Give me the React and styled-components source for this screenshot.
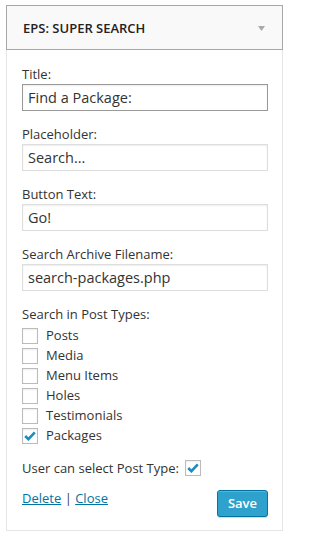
import React, { useState } from 'react';
import styled, { createGlobalStyle } from 'styled-components';

const GlobalStyle = createGlobalStyle`
  html, body {
    margin: 0;
    padding: 0;
    background: #fff;
  }
  * {
    box-sizing: border-box;
  }
`;

const Page = styled.div`
  padding: 5px 5px 8px 6px;
  font-family: "Open Sans", "Liberation Sans", sans-serif;
  font-size: 13px;
  color: #333;
`;

const Widget = styled.div`
  width: 277px;
`;

const WidgetTop = styled.div`
  height: 45px;
  display: flex;
  align-items: center;
  justify-content: space-between;
  padding: 0 17px 0 16px;
  background: #f9f9f9;
  border: 1px solid #a7a7a7;
`;

const WidgetTitle = styled.h4`
  margin: 0;
  font-size: 13px;
  font-weight: 600;
  color: #222;
`;

const Arrow = styled.svg`
  display: block;
  width: 7px;
  height: 5px;
  margin-top: 2px;
`;

const WidgetInside = styled.div`
  border: 1px solid #e5e5e5;
  border-top: none;
  padding: 15px 14px 13px 15px;
`;

const Field = styled.div`
  margin-bottom: 14px;
`;

const Label = styled.label`
  display: block;
  line-height: 18px;
  margin-bottom: 1px;
  color: #333;
`;

const TextInput = styled.input`
  display: block;
  width: 100%;
  height: 27px;
  margin: 0;
  padding: 0 5px;
  font-family: inherit;
  font-size: 14.5px;
  color: #333;
  background: #fff;
  border: 1px solid ${p => (p.$focused ? '#999' : '#ddd')};
  border-radius: 0;
  box-shadow: inset 0 1px 2px rgba(0, 0, 0, 0.07);
  outline: none;
`;

const TypeList = styled.div`
  margin-top: 3px;
`;

const CheckRow = styled.label`
  display: flex;
  align-items: flex-start;
  height: 20px;
  line-height: 18px;
  gap: 8px;
  cursor: pointer;
`;

const Box = styled.span`
  flex-shrink: 0;
  width: 16px;
  height: 16px;
  margin-top: 2px;
  display: flex;
  align-items: center;
  justify-content: center;
  background: #fff;
  border: 1px solid #bbb;
  box-shadow: inset 0 1px 2px rgba(0, 0, 0, 0.07);
`;

const Tick = styled.svg`
  display: block;
  width: 12px;
  height: 10px;
`;

const SelectRow = styled.label`
  display: flex;
  align-items: center;
  gap: 6px;
  margin-top: 13px;
  line-height: 18px;
  cursor: pointer;

  ${Box} {
    margin-top: 0;
  }
`;

const Actions = styled.div`
  display: flex;
  justify-content: space-between;
  align-items: flex-start;
  margin-top: 13px;
`;

const Links = styled.div`
  line-height: 18px;
  margin-top: -1px;
  color: #444;
`;

const Link = styled.a`
  color: #0074a2;
  text-decoration: underline;
  cursor: pointer;
`;

const SaveButton = styled.button`
  height: 27px;
  padding: 0 10px;
  font-family: inherit;
  font-size: 13px;
  font-weight: 600;
  line-height: 25px;
  color: #fff;
  background: #2ea2cc;
  border: 1px solid #0074a2;
  border-radius: 3px;
  box-shadow: inset 0 1px 0 rgba(120, 200, 230, 0.5), 0 1px 0 rgba(0, 0, 0, 0.15);
  cursor: pointer;
`;

function Checkbox({ checked }) {
  return (
    <Box>
      {checked && (
        <Tick viewBox="0 0 12 10">
          <path d="M1.2 5 L4.4 8.2 L10.8 1.4" fill="none" stroke="#1e8cbe" strokeWidth="2.6" />
        </Tick>
      )}
    </Box>
  );
}

const fields = [
  { label: 'Title:', value: 'Find a Package:', focused: true },
  { label: 'Placeholder:', value: 'Search...' },
  { label: 'Button Text:', value: 'Go!' },
  { label: 'Search Archive Filename:', value: 'search-packages.php' },
];

const postTypes = [
  { name: 'Posts', checked: false },
  { name: 'Media', checked: false },
  { name: 'Menu Items', checked: false },
  { name: 'Holes', checked: false },
  { name: 'Testimonials', checked: false },
  { name: 'Packages', checked: true },
];

export default function App() {
  const [values, setValues] = useState(fields.map(f => f.value));

  return (
    <Page>
      <GlobalStyle />
      <Widget>
        <WidgetTop>
          <WidgetTitle>EPS: SUPER SEARCH</WidgetTitle>
          <Arrow viewBox="0 0 7 5">
            <path d="M0 0 L7 0 L3.5 5 Z" fill="#aaa" />
          </Arrow>
        </WidgetTop>
        <WidgetInside>
          {fields.map((f, i) => (
            <Field key={f.label}>
              <Label>{f.label}</Label>
              <TextInput
                $focused={f.focused}
                value={values[i]}
                onChange={e => {
                  const next = [...values];
                  next[i] = e.target.value;
                  setValues(next);
                }}
              />
            </Field>
          ))}

          <Label>Search in Post Types:</Label>
          <TypeList>
            {postTypes.map(t => (
              <CheckRow key={t.name}>
                <Checkbox checked={t.checked} />
                {t.name}
              </CheckRow>
            ))}
          </TypeList>

          <SelectRow>
            User can select Post Type:
            <Checkbox checked />
          </SelectRow>

          <Actions>
            <Links>
              <Link>Delete</Link> | <Link>Close</Link>
            </Links>
            <SaveButton>Save</SaveButton>
          </Actions>
        </WidgetInside>
      </Widget>
    </Page>
  );
}
